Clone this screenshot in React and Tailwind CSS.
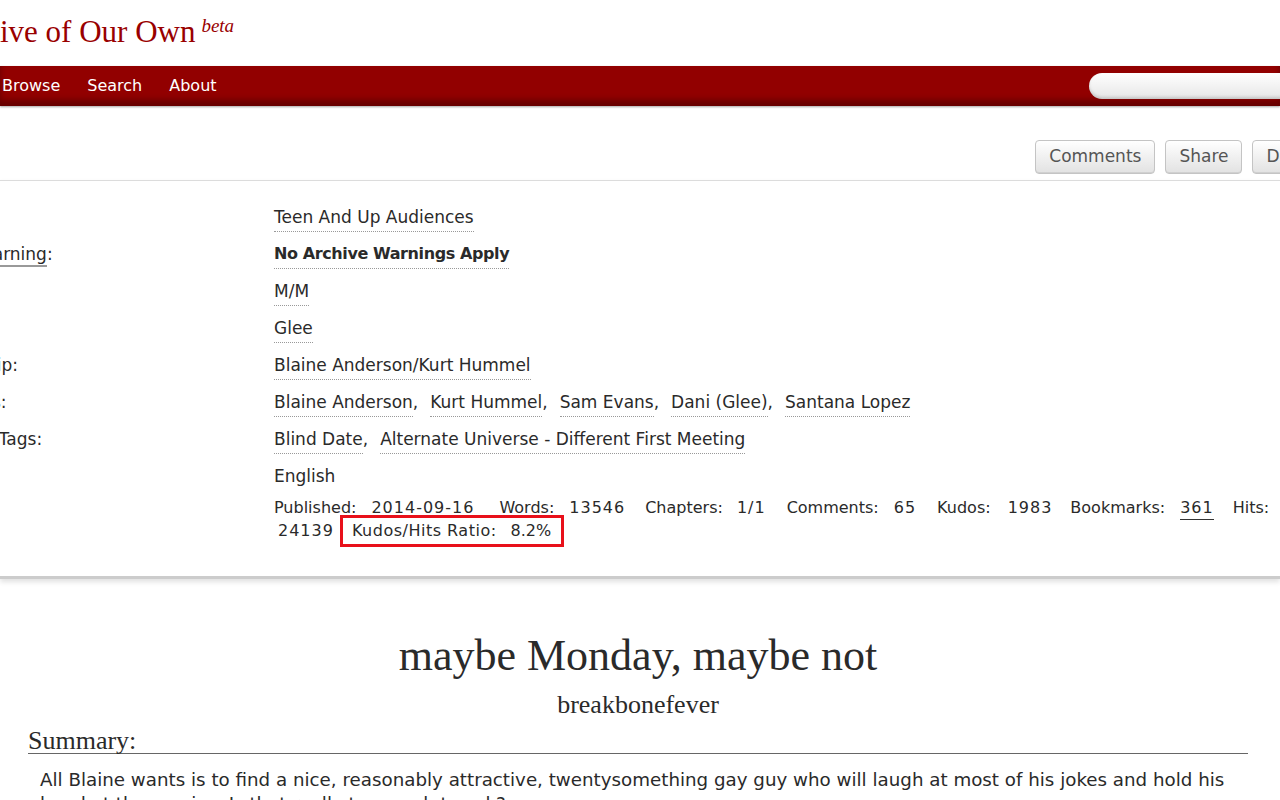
import React from "react";

const sans = "font-['DejaVu_Sans',sans-serif]";
const serif = "font-['Liberation_Serif',serif]";

function Tag({ children, bold }) {
  return (
    <span
      className={`inline-block leading-[20px] pb-[4px] border-b border-dotted border-[#999] ${
        bold ? "font-bold text-[16px] tracking-[-0.4px]" : ""
      }`}
    >
      {children}
    </span>
  );
}

function TagList({ items }) {
  return (
    <div className="flex">
      {items.map((t, i) => (
        <span key={t} className="flex">
          <Tag>{t}</Tag>
          {i < items.length - 1 && <span className="leading-[20px] mr-[12px]">,</span>}
        </span>
      ))}
    </div>
  );
}

function Row({ label, children, labelLink, h = "h-[37px]" }) {
  return (
    <div className={`flex items-start pt-[9px] ${h}`}>
      <div className="w-[366px] -ml-[4px] shrink-0 leading-[20px] text-[17px] text-[#2a2a2a]">
        {labelLink ? (
          <span>
            <span className="border-b-2 border-[#999] pb-[1px]">{label}</span>:
          </span>
        ) : (
          <span>{label}:</span>
        )}
      </div>
      <div className="flex text-[17px] text-[#2a2a2a]">{children}</div>
    </div>
  );
}

function Stat({ label, value, link, mr, gap = "ml-[15px]" }) {
  return (
    <span className={`flex ${mr}`}>
      <span>{label}:</span>
      <span className={`${gap} tracking-[1px] ${link ? "border-b border-[#333]" : ""}`}>{value}</span>
    </span>
  );
}

export default function App() {
  return (
    <div className={`w-full overflow-hidden bg-white text-[#2a2a2a] ${sans}`}>
      {/* header */}
      <div className="h-[66px] pt-[14px]">
        <div className={`-ml-[62px] text-[31px] leading-[36px] text-[#990000] ${serif} flex items-start whitespace-nowrap`}>
          <span>Archive of Our Own</span>
          <span className="italic text-[19px] leading-[19px] ml-[6px] mt-[2px]">beta</span>
        </div>
      </div>

      {/* nav */}
      <div className="h-[40px] bg-[#920000] shadow-[inset_0_-6px_6px_rgba(0,0,0,0.3),0_1px_2px_rgba(0,0,0,0.35)] flex items-center justify-between">
        <div className="flex text-white text-[16px] pl-[2px] gap-[27px] -mt-[1px]">
          <span>Browse</span>
          <span>Search</span>
          <span>About</span>
        </div>
        <div className="w-[200px] h-[26px] rounded-l-full bg-linear-to-b from-white to-[#e6e6e6] shadow-[inset_0_-2px_3px_rgba(0,0,0,0.15)] -mr-[9px]"></div>
      </div>

      {/* action buttons */}
      <div className="flex justify-end gap-[10px] pt-[34px] h-[74px] -mr-[85px]">
        {["Comments", "Share", "Download"].map((b) => (
          <div
            key={b}
            className="h-[34px] px-[13px] flex items-center border border-[#c4c4c4] rounded-[4px] bg-linear-to-b from-white to-[#e2e2e2] text-[#555] text-[17px] shadow-[inset_0_-1px_0_#d0d0d0]"
          >
            {b}
          </div>
        ))}
      </div>

      {/* meta box */}
      <div className="border-t border-[#dcdcdc] border-b-[3px] border-b-[#cccccc] shadow-[0_3px_5px_rgba(0,0,0,0.12)] pt-[17px] pb-[34px]">
        <div className="-ml-[88px]">
          <Row label="Rating">
            <Tag>Teen And Up Audiences</Tag>
          </Row>
          <Row label="Archive Warning" labelLink>
            <Tag bold>No Archive Warnings Apply</Tag>
          </Row>
          <Row label="Category">
            <Tag>M/M</Tag>
          </Row>
          <Row label="Fandom">
            <Tag>Glee</Tag>
          </Row>
          <Row label="Relationship">
            <Tag>Blaine Anderson/Kurt Hummel</Tag>
          </Row>
          <Row label="Characters">
            <TagList items={["Blaine Anderson", "Kurt Hummel", "Sam Evans", "Dani (Glee)", "Santana Lopez"]} />
          </Row>
          <Row label="Additional Tags">
            <TagList items={["Blind Date", "Alternate Universe - Different First Meeting"]} />
          </Row>
          <Row label="Language" h="h-[32px]">
            <span className="leading-[20px]">English</span>
          </Row>
          <div className="flex items-start pt-[8px]">
            <div className="w-[366px] -ml-[4px] shrink-0 leading-[22px] text-[17px]">Stats:</div>
            <div className="text-[16px] leading-[22px] whitespace-nowrap">
              <div className="flex">
                <Stat label="Published" value="2014-09-16" mr="mr-[25px]" />
                <Stat label="Words" value="13546" mr="mr-[20px]" />
                <Stat label="Chapters" value="1/1" mr="mr-[21px]" gap="ml-[14px]" />
                <Stat label="Comments" value="65" mr="mr-[21px]" />
                <Stat label="Kudos" value="1983" mr="mr-[18px]" gap="ml-[17px]" />
                <Stat label="Bookmarks" value="361" link mr="mr-[19px]" gap="ml-[15px]" />
                <span>Hits:</span>
              </div>
              <div className="flex items-center h-[22px]">
                <span className="ml-[4px] tracking-[1px]">24139</span>
                <span className="ml-[6px] border-[3px] border-[#e8101a] h-[32px] shrink-0 flex items-center pl-[9px] pr-[10px]">
                  <span className="tracking-[0.5px]">Kudos/Hits Ratio:</span>
                  <span className="ml-[14px]">8.2%</span>
                </span>
              </div>
            </div>
          </div>
        </div>
      </div>

      {/* work */}
      <div className="mx-[28px] w-[1220px]">
        <h2 className={`${serif} text-[44px] leading-[48px] text-center text-[#2a2a2a] mt-[53px]`}>
          maybe Monday, maybe not
        </h2>
        <h3 className={`${serif} text-[26px] leading-[30px] text-center text-[#2a2a2a] mt-[10px]`}>
          breakbonefever
        </h3>
        <h3 className={`${serif} text-[26px] leading-[25px] text-[#2a2a2a] border-b border-[#666] mt-[8px]`}>
          Summary:
        </h3>
        <p className="text-[18.25px] leading-[24px] text-[#2a2a2a] ml-[12px] mt-[14px] whitespace-nowrap">
          All Blaine wants is to find a nice, reasonably attractive, twentysomething gay guy who will laugh at most of his jokes and hold his
        </p>
        <p className="text-[18.25px] leading-[24px] text-[#2a2a2a] ml-[12px]">
          hand at the movies. Is that really too much to ask?
        </p>
      </div>
    </div>
  );
}
